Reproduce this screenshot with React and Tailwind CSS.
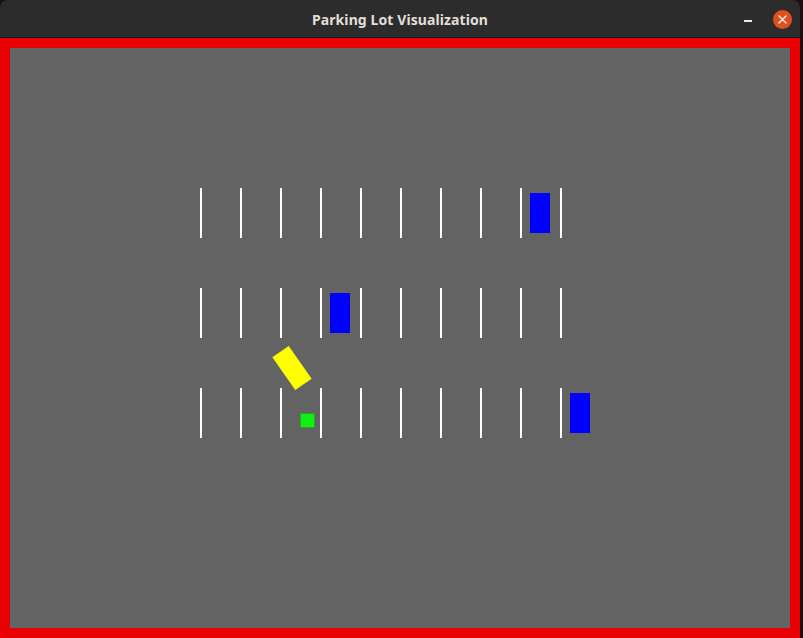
import React from 'react';

const lineXs = [190, 230, 270, 310, 350, 390, 430, 470, 510, 550];
const rowYs = [140, 240, 340];

const cars = [
    { x: 520, y: 145 },
    { x: 320, y: 245 },
    { x: 560, y: 345 },
];

const App = () => {
    return (
        <div className="w-[803px] h-[638px] flex bg-[#1b0f12] overflow-hidden" style={{ fontFamily: '"Noto Sans", "DejaVu Sans", sans-serif' }}>
            <div className="w-[800px] h-full flex flex-col">
                {/* Title bar */}
                <div className="h-[38px] bg-[#2c2c2c] rounded-t-[8px] relative flex items-center justify-center pt-[2px] border-b border-[#1a1a1a]">
                    <span className="text-[14px] font-bold text-[#e2dfd8] tracking-[0.1px]">Parking Lot Visualization</span>
                    <div className="absolute right-[8px] top-0 h-full flex items-center gap-[21px] pt-[1px]">
                        <div className="w-[8px] h-[1.5px] bg-[#e8e8e8] mt-[4px]" />
                        <div className="w-[19px] h-[19px] rounded-full bg-[#e0501e] flex items-center justify-center">
                            <svg width="9" height="9" viewBox="0 0 9 9">
                                <path d="M1 1 L8 8 M8 1 L1 8" stroke="#fff2ec" strokeWidth="1.4" strokeLinecap="round" />
                            </svg>
                        </div>
                    </div>
                </div>

                {/* Red frame with canvas */}
                <div className="flex-1 border-[10px] border-[#e80000] bg-[#636363]">
                    <div className="relative w-full h-full">
                        {rowYs.map((y) =>
                            lineXs.map((x) => (
                                <div key={`${x}-${y}`} className="absolute w-[2px] h-[50px] bg-white" style={{ left: x, top: y }} />
                            ))
                        )}
                        {cars.map((c, i) => (
                            <div key={i} className="absolute w-[20px] h-[40px] bg-[#0000ff]" style={{ left: c.x, top: c.y }} />
                        ))}
                        <div className="absolute w-[15px] h-[15px] bg-[#11ee11] border border-[#22aa22]" style={{ left: 290, top: 365 }} />
                        <div className="absolute w-[20px] h-[40px] bg-[#ffff00] rotate-[-35deg]" style={{ left: 272, top: 299.5 }} />
                    </div>
                </div>
            </div>
            <div className="w-[3px] h-full bg-[#1b0f12]" />
        </div>
    );
};

export default App;
